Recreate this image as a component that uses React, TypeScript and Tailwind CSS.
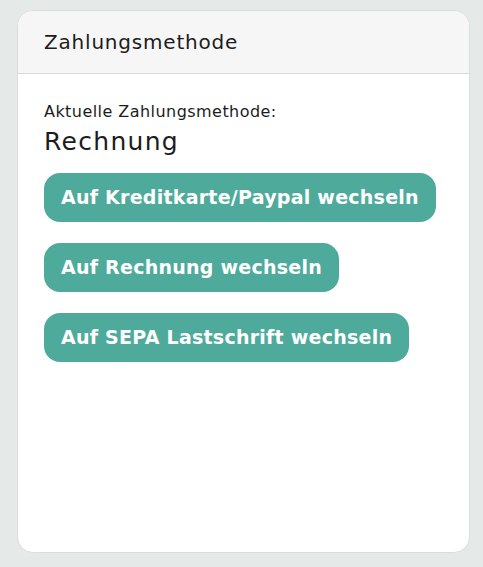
import React from "react";

const font = { fontFamily: '"DejaVu Sans", "Liberation Sans", sans-serif' };

const methods = [
  "Auf Kreditkarte/Paypal wechseln",
  "Auf Rechnung wechseln",
  "Auf SEPA Lastschrift wechseln",
];

export default function App() {
  return (
    <div
      className="min-h-[567px] w-[483px] bg-[#e5eae8] pl-[17px] pt-[10px] pb-[14px]"
      style={font}
    >
      <div className="flex h-[543px] w-[453px] flex-col overflow-hidden rounded-[16px] border border-[#dcdcdc] bg-white">
        <div className="flex h-[63px] items-center border-b border-[#dadada] bg-[#f6f6f6] px-[26px]">
          <h2 className="text-[20px] font-normal tracking-[0.8px] text-[#1c1c1c]">Zahlungsmethode</h2>
        </div>
        <div className="flex flex-col px-[26px] pt-[28px]">
          <p className="text-[16px] leading-[20px] tracking-[0.45px] text-[#1c1c1c]">Aktuelle Zahlungsmethode:</p>
          <p className="mt-[4px] text-[25px] leading-[32px] tracking-[1.3px] text-[#1c1c1c]">Rechnung</p>
          <div className="mt-[15px] flex flex-col items-start gap-[21px]">
            {methods.map((m) => (
              <button
                key={m}
                className="h-[49px] rounded-[16px] bg-[#4eab9b] px-[17px] text-[19px] font-bold tracking-[0.25px] text-white"
              >
                {m}
              </button>
            ))}
          </div>
        </div>
      </div>
    </div>
  );
}
